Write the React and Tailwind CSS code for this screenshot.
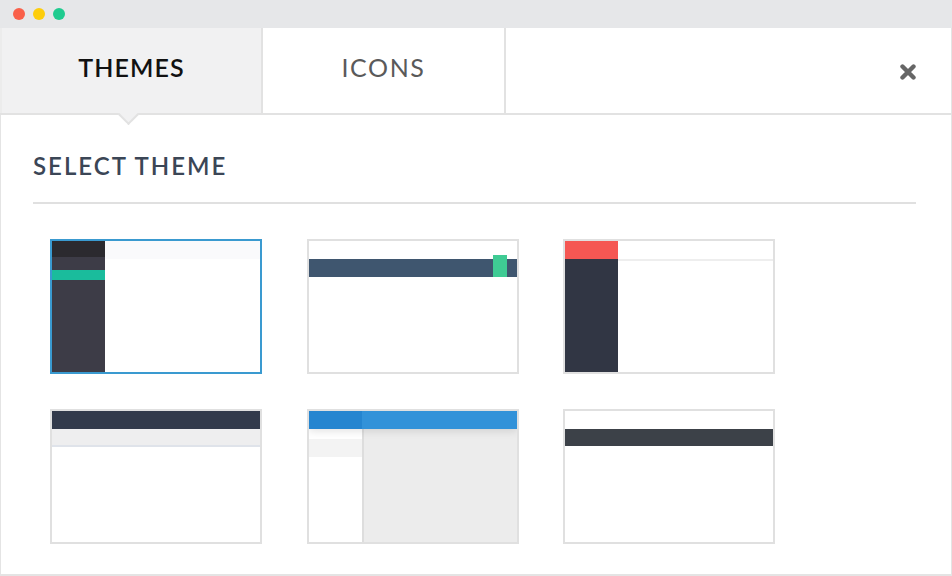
import React from 'react'

const thumb = 'relative h-[135px] w-[212px] overflow-hidden border-2 bg-white'

function Thumbs() {
  return (
    <div className="ml-[17px] mt-[35px] grid grid-cols-[212px_212px_212px] gap-x-[44.5px] gap-y-[35px]">
      {/* sidebar + teal */}
      <div className={`${thumb} flex border-[#3a9ad0]`}>
        <div className="w-[53px] shrink-0 bg-[#3d3c47]">
          <div className="h-[16px] bg-[#2b2a2f]" />
          <div className="mt-[13px] h-[10px] bg-[#1abc9c]" />
        </div>
        <div className="h-[18px] flex-1 bg-[#fafafc]" />
      </div>

      {/* navy top bar */}
      <div className={`${thumb} border-[#e0e0e0]`}>
        <div className="mt-[18px] h-[18px] bg-[#3f566f]" />
        <div className="absolute right-[10px] top-[14px] h-[22px] w-[14px] bg-[#3fcb94]" />
      </div>

      {/* red logo */}
      <div className={`${thumb} flex border-[#e0e0e0]`}>
        <div className="w-[53px] shrink-0 bg-[#313644]">
          <div className="h-[18px] bg-[#f55753]" />
        </div>
        <div className="h-[20px] flex-1 border-b-2 border-[#eeeeee]" />
      </div>

      {/* dark bar + grey subnav */}
      <div className={`${thumb} border-[#e0e0e0]`}>
        <div className="h-[18px] bg-[#323a4b]" />
        <div className="h-[18px] border-b-2 border-[#dfe3ea] bg-[#eeeeef]" />
      </div>

      {/* blue bar + grey content */}
      <div className={`${thumb} flex flex-col border-[#e0e0e0]`}>
        <div className="relative z-10 flex h-[18px] shadow-[0_2px_8px_rgba(0,0,0,0.12)]">
          <div className="w-[53px] bg-[#2585d0]" />
          <div className="flex-1 bg-[#3292d9]" />
        </div>
        <div className="flex flex-1">
          <div className="w-[53px] bg-white">
            <div className="mt-[10px] h-[18px] bg-[#f3f3f3]" />
          </div>
          <div className="flex-1 border-l-2 border-[#dddddd] bg-[#ececec]" />
        </div>
      </div>

      {/* charcoal bar */}
      <div className={`${thumb} border-[#e0e0e0]`}>
        <div className="mt-[18px] h-[17px] bg-[#3c4148]" />
      </div>
    </div>
  )
}

export default function App() {
  return (
    <div className="flex h-[576px] w-[952px] flex-col overflow-hidden bg-white font-['Lato',sans-serif]">
      <div className="flex h-[28px] items-center gap-[8px] bg-[#e6e7e9] pl-[13px]">
        <span className="h-[12px] w-[12px] rounded-full bg-[#f9604a]" />
        <span className="h-[12px] w-[12px] rounded-full bg-[#fdcd0c]" />
        <span className="h-[12px] w-[12px] rounded-full bg-[#1fcb8f]" />
      </div>

      <div className="flex-1 border-x border-b-2 border-[#e4e4e4]">
        <div className="-mx-px flex h-[87px] border-b-2 border-[#e2e2e2]">
          <div className="relative flex w-[263px] items-center justify-center border-x-2 border-l-[#ececec] border-r-[#e2e2e2] bg-[#f1f1f2] pb-[5px] text-[25px] font-semibold tracking-[1.1px] text-[#111111]">
            THEMES
            <span className="absolute left-[119px] top-[79px] h-[15px] w-[15px] rotate-45 border-r-2 border-b-2 border-[#e2e2e2] bg-[#f1f1f2]" />
          </div>
          <div className="flex w-[243px] items-center justify-center border-r-2 border-[#e2e2e2] pb-[5px] text-[25px] font-normal tracking-[1.6px] text-[#5a5a5a]">
            ICONS
          </div>
          <div className="flex flex-1 items-center justify-end pr-[36px] pt-[3px]">
            <svg width="16" height="16" viewBox="0 0 16 16">
              <path d="M2.5 2.5 13.5 13.5M13.5 2.5 2.5 13.5" stroke="#666666" strokeWidth="4.4" strokeLinecap="round" />
            </svg>
          </div>
        </div>

        <div className="px-[32px] pt-[34px]">
          <div className="text-[24px] leading-[34px] font-semibold tracking-[2px] text-[#3b4656]">SELECT THEME</div>
          <div className="mt-[19px] h-[2px] w-[883px] bg-[#e0e0e0]" />
          <Thumbs />
        </div>
      </div>
    </div>
  )
}
